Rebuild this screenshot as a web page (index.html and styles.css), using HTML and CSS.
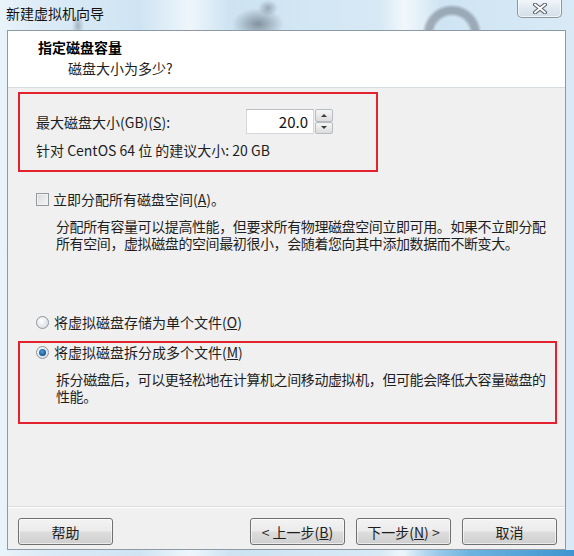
FILE: index.html
```html
<!DOCTYPE html>
<html lang="zh-CN">
<head>
    <meta charset="UTF-8">
    <title>新建虚拟机向导</title>
    <link rel="stylesheet" href="styles.css">
</head>
<body>
<div class="window">

    <!-- Title bar -->
    <div class="titlebar">
        <span class="title">新建虚拟机向导</span>
        <div class="close-btn">
            <svg width="14" height="11" viewBox="0 0 14 11">
                <path d="M2 1.5 L12 9.5 M12 1.5 L2 9.5" stroke="#5a5f66" stroke-width="4" stroke-linecap="round"/>
                <path d="M2 1.5 L12 9.5 M12 1.5 L2 9.5" stroke="#ffffff" stroke-width="2" stroke-linecap="round"/>
            </svg>
        </div>
    </div>

    <div class="client">
        <!-- Header -->
        <div class="header">
            <div class="header-title">指定磁盘容量</div>
            <div class="header-sub">磁盘大小为多少?</div>
        </div>

        <!-- Page body -->
        <div class="page">
            <div class="red-box size-box">
                <div class="size-row">
                    <span class="size-label">最大磁盘大小(GB)(<u>S</u>):</span>
                    <div class="spin">
                        <div class="spin-input">20.0</div>
                        <div class="spin-btns">
                            <div class="spin-btn"><span class="arrow-up"></span></div>
                            <div class="spin-btn"><span class="arrow-down"></span></div>
                        </div>
                    </div>
                </div>
                <div class="hint">针对 CentOS 64 位 的建议大小: 20 GB</div>
            </div>

            <div class="option-row check-row">
                <span class="checkbox"></span>
                <span>立即分配所有磁盘空间(<u>A</u>)。</span>
            </div>
            <div class="desc">
                <div>分配所有容量可以提高性能，但要求所有物理磁盘空间立即可用。如果不立即分配</div>
                <div>所有空间，虚拟磁盘的空间最初很小，会随着您向其中添加数据而不断变大。</div>
            </div>

            <div class="option-row radio-row">
                <span class="radio"></span>
                <span>将虚拟磁盘存储为单个文件(<u>O</u>)</span>
            </div>

            <div class="red-box split-box">
                <div class="option-row">
                    <span class="radio checked"></span>
                    <span>将虚拟磁盘拆分成多个文件(<u>M</u>)</span>
                </div>
                <div class="desc split-desc">
                    <div>拆分磁盘后，可以更轻松地在计算机之间移动虚拟机，但可能会降低大容量磁盘的</div>
                    <div>性能。</div>
                </div>
            </div>
        </div>

        <!-- Footer buttons -->
        <div class="footer">
            <button class="btn">帮助</button>
            <div class="spacer"></div>
            <button class="btn">&lt; 上一步(<u>B</u>)</button>
            <button class="btn">下一步(<u>N</u>) &gt;</button>
            <button class="btn">取消</button>
        </div>
    </div>

    <div class="frame-bottom"></div>
</div>
</body>
</html>
```

FILE: styles.css
```css
/* Basic styling */
body {
    margin: 0;
    padding: 0;
    font-family: "Noto Sans CJK SC", "Microsoft YaHei", sans-serif;
    font-size: 14px;
    color: #1e1e1e;
    background-color: #e4eff8;
}

.window {
    width: 574px;
    height: 556px;
    display: flex;
    flex-direction: column;
    overflow: hidden;
    background:
        linear-gradient(90deg, #e9f3fa 0px, #dcebf6 40px, #cfe4f3 140px, #eef6fb 190px, #cde3f2 230px, #d7e9f5 380px, #f2f8fc 405px, #cfe4f3 440px, #d9eaf6 574px);
}

/* Title bar */
.titlebar {
    height: 30px;
    flex-shrink: 0;
    position: relative;
    display: flex;
    align-items: center;
    padding-left: 6px;
    background:
        radial-gradient(ellipse 26px 16px at 258px 24px, rgba(70, 78, 88, 0.55), rgba(70, 78, 88, 0) 100%),
        radial-gradient(ellipse 10px 8px at 268px 8px, rgba(70, 78, 88, 0.4), rgba(70, 78, 88, 0) 100%),
        radial-gradient(circle at 452px 34px, rgba(90, 98, 108, 0) 17px, rgba(90, 98, 108, 0.45) 21px, rgba(90, 98, 108, 0.45) 26px, rgba(90, 98, 108, 0) 30px),
        radial-gradient(ellipse 6px 12px at 78px 26px, rgba(70, 78, 88, 0.35), rgba(70, 78, 88, 0) 100%);
}

.title {
    font-size: 14px;
    color: #111;
    margin-top: -4px;
}

.close-btn {
    position: absolute;
    left: 517px;
    top: -1px;
    width: 43px;
    height: 18px;
    border: 1px solid #8c96a0;
    border-top: none;
    border-radius: 0 0 5px 5px;
    background: linear-gradient(#f4f8fb, #dfe8f0 55%, #d3dee8);
    display: flex;
    align-items: center;
    justify-content: center;
    box-shadow: inset 0 0 0 1px rgba(255, 255, 255, 0.7);
}

/* Client area */
.client {
    flex: 1;
    margin: 0 8px 0 7px;
    border: 1px solid #8d9aa6;
    background-color: #f0f0f0;
    display: flex;
    flex-direction: column;
}

.frame-bottom {
    height: 6px;
    flex-shrink: 0;
    background: linear-gradient(90deg, rgba(255, 255, 255, 0) 0, rgba(255, 255, 255, 0) 400px, #6db3e0 470px, #3f94cf 574px);
}

/* Header */
.header {
    height: 57px;
    background-color: #ffffff;
    border-bottom: 1px solid #d6dbe0;
    padding: 6px 0 0 30px;
    box-sizing: border-box;
    flex-shrink: 0;
}

.header-title {
    font-weight: bold;
    font-size: 14px;
    line-height: 20px;
    color: #000;
}

.header-sub {
    padding-left: 30px;
    line-height: 20px;
    margin-top: 1px;
}

/* Page body */
.page {
    flex: 1;
    padding: 4px 8px 0 10px;
}

.red-box {
    border: 2px solid #e3222d;
    box-sizing: border-box;
}

.size-box {
    width: 360px;
    height: 80px;
    padding: 15px 0 0 16px;
}

.size-row {
    display: flex;
    align-items: center;
    height: 25px;
}

.size-label {
    width: 210px;
}

.spin {
    display: flex;
    height: 25px;
}

.spin-input {
    width: 68px;
    box-sizing: border-box;
    background-color: #fff;
    border: 1px solid #d3d6da;
    border-top-color: #b9bdc2;
    text-align: right;
    padding-right: 5px;
    font-size: 15px;
    line-height: 23px;
    color: #111;
}

.spin-btns {
    width: 18px;
    margin-left: 1px;
    display: flex;
    flex-direction: column;
}

.spin-btn {
    flex: 1;
    border: 1px solid #b7bcc2;
    border-radius: 2px;
    background: linear-gradient(#f6f6f6, #dcdcdc);
    display: flex;
    align-items: center;
    justify-content: center;
}

.arrow-up {
    width: 0;
    height: 0;
    border-left: 3px solid transparent;
    border-right: 3px solid transparent;
    border-bottom: 3px solid #3a3a3a;
}

.arrow-down {
    width: 0;
    height: 0;
    border-left: 3px solid transparent;
    border-right: 3px solid transparent;
    border-top: 3px solid #3a3a3a;
}

.hint {
    margin-top: 8px;
    line-height: 17px;
}

/* Options */
.option-row {
    display: flex;
    align-items: center;
    line-height: 17px;
    padding-left: 18px;
}

.check-row {
    margin-top: 19px;
}

.checkbox {
    width: 11px;
    height: 11px;
    border: 1px solid #979a9c;
    background: linear-gradient(135deg, #d7d9db, #f7f7f7);
    box-shadow: inset 0 0 0 1px #f2f2f2;
    margin-right: 4px;
}

.radio {
    width: 11px;
    height: 11px;
    border: 1px solid #8f969c;
    border-radius: 50%;
    background: radial-gradient(circle at 40% 35%, #ffffff, #dde2e6 70%, #c9d0d6);
    margin-right: 5px;
    position: relative;
}

.radio.checked::after {
    content: "";
    position: absolute;
    left: 2px;
    top: 2px;
    width: 7px;
    height: 7px;
    border-radius: 50%;
    background: radial-gradient(circle at 45% 40%, #4aa0e0, #1b5e9e 60%, #0f3c70);
}

/* Multi-line help text: Latin font first keeps line boxes at 17px */
.desc {
    margin-top: 11px;
    padding-left: 38px;
    font-family: "Liberation Sans", "Noto Sans CJK SC", sans-serif;
    line-height: 17px;
    white-space: nowrap;
    letter-spacing: -0.4px;
}

.radio-row {
    margin-top: 61px;
}

.split-box {
    margin-top: 10px;
    height: 83px;
    padding-top: 1px;
}

.split-box .option-row {
    padding-left: 16px;
}

.split-desc {
    padding-left: 36px;
}

/* Footer */
.footer {
    height: 43px;
    box-sizing: border-box;
    border-top: 1px solid #dcdcdc;
    box-shadow: inset 0 1px 0 #ffffff;
    display: flex;
    align-items: flex-start;
    padding: 11px 8px 0 10px;
    flex-shrink: 0;
}

.spacer {
    flex: 1;
}

.btn {
    width: 95px;
    height: 27px;
    margin-left: 11px;
    border: 1px solid #707070;
    border-radius: 3px;
    background: linear-gradient(#f3f3f3 0, #ebebeb 48%, #dddddd 52%, #cfcfcf 100%);
    box-shadow: inset 0 0 0 1px rgba(255, 255, 255, 0.6);
    font-family: "Noto Sans CJK SC", "Microsoft YaHei", sans-serif;
    font-size: 14px;
    color: #1e1e1e;
    padding: 0;
}

.btn:first-child {
    margin-left: 0;
}
```
